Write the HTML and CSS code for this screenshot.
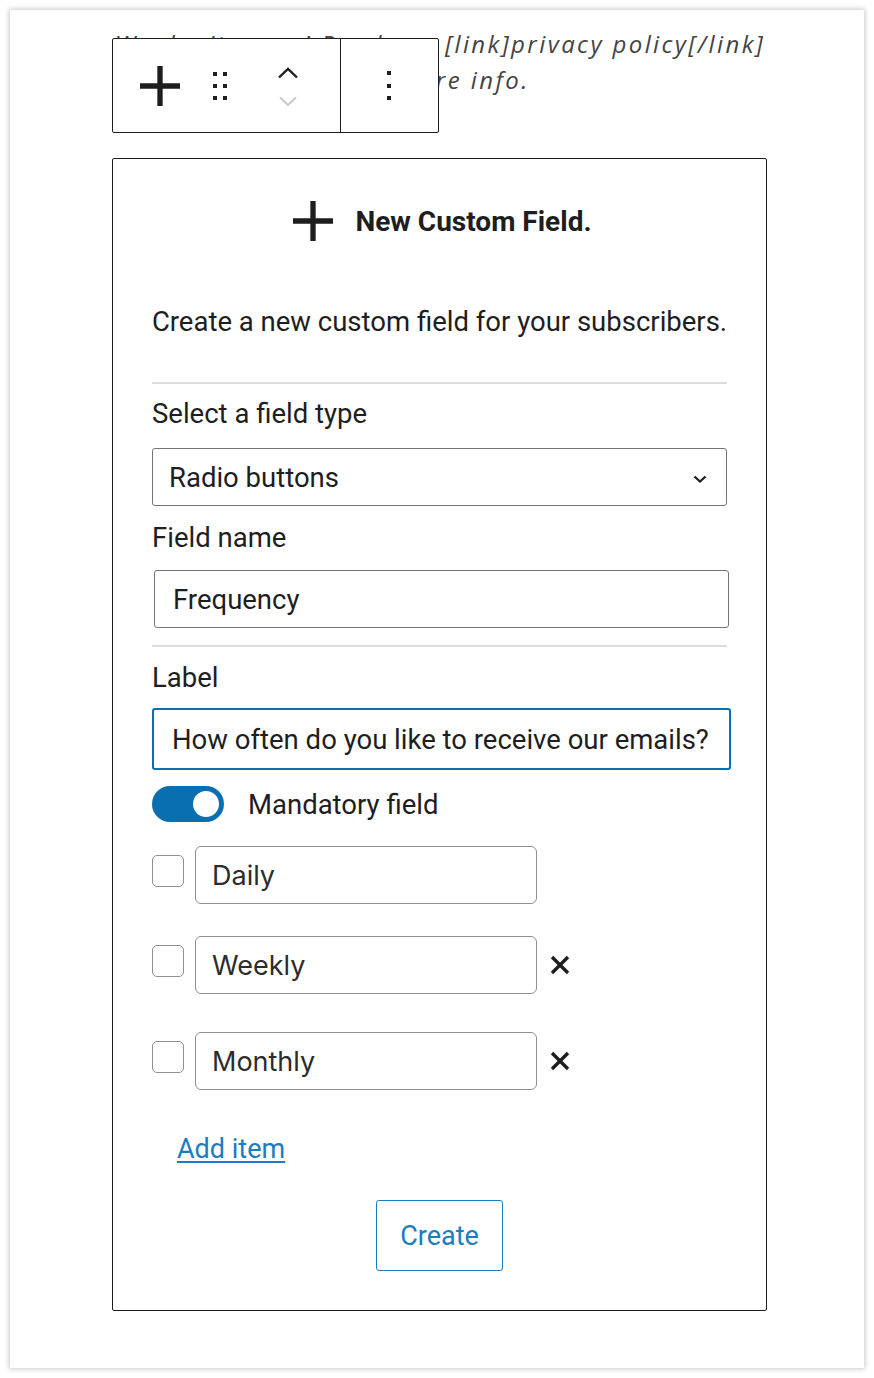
FILE: index.html
```html
<!DOCTYPE html>
<html lang="en">
<head>
<meta charset="utf-8">
<title>New Custom Field</title>
<link rel="stylesheet" href="styles.css">
</head>
<body>
<div class="frame">
  <p class="bg-text">We don't spam! Read our [link]privacy policy[/link] for more info.</p>

  <div class="toolbar">
    <div class="tb-group tb-main">
      <button class="tb-btn tb-plus" aria-label="Add block">
        <svg width="40" height="40" viewBox="6 6 12 12"><path d="M18 11.2h-5.2V6h-1.6v5.2H6v1.6h5.2V18h1.6v-5.2H18z" fill="#1e1e1e"/></svg>
      </button>
      <span class="tb-drag" aria-hidden="true">
        <svg width="18" height="30" viewBox="0 0 18 30"><g fill="#1e1e1e"><rect x="2" y="1" width="4" height="4"/><rect x="12" y="1" width="4" height="4"/><rect x="2" y="13" width="4" height="4"/><rect x="12" y="13" width="4" height="4"/><rect x="2" y="25" width="4" height="4"/><rect x="12" y="25" width="4" height="4"/></g></svg>
      </span>
      <span class="tb-movers">
        <svg width="24" height="14" viewBox="0 0 24 14"><path d="M3 11.5 12 3l9 8.5" fill="none" stroke="#1e1e1e" stroke-width="2.4"/></svg>
        <svg width="24" height="14" viewBox="0 0 24 14"><path d="M4 3.5l8 7.5 8-7.5" fill="none" stroke="#c8c8c8" stroke-width="2"/></svg>
      </span>
    </div>
    <div class="tb-group tb-more">
      <svg width="6" height="32" viewBox="0 0 6 32"><g fill="#1e1e1e"><rect x="1" y="1" width="4" height="4"/><rect x="1" y="14" width="4" height="4"/><rect x="1" y="26" width="4" height="4"/></g></svg>
    </div>
  </div>

  <div class="cf-block">
    <div class="cf-header">
      <svg width="40" height="44" viewBox="6 5.5 12 13"><path d="M18 11.2h-5.2V6h-1.6v5.2H6v1.6h5.2V18h1.6v-5.2H18z" fill="#1e1e1e"/></svg>
      <span class="cf-title">New Custom Field.</span>
    </div>
    <p class="cf-desc">Create a new custom field for your subscribers.</p>
    <hr class="cf-sep cf-sep-first">

    <label class="cf-label lbl-type">Select a field type</label>
    <div class="cf-select">
      <span>Radio buttons</span>
      <svg width="16" height="10" viewBox="0 0 16 10"><path d="M2.5 2.5 8 7.5l5.5-5" fill="none" stroke="#1e1e1e" stroke-width="2.2"/></svg>
    </div>

    <label class="cf-label lbl-name">Field name</label>
    <div class="cf-input cf-input-name">Frequency</div>
    <hr class="cf-sep cf-sep-second">

    <label class="cf-label lbl-label">Label</label>
    <div class="cf-input cf-input-focus">How often do you like to receive our emails?</div>

    <div class="cf-toggle-row">
      <span class="cf-toggle"><span class="cf-knob"></span></span>
      <span class="cf-toggle-text">Mandatory field</span>
    </div>

    <div class="cf-item item-1">
      <span class="cf-check"></span>
      <div class="cf-item-input">Daily</div>
    </div>
    <div class="cf-item item-2">
      <span class="cf-check"></span>
      <div class="cf-item-input">Weekly</div>
      <svg class="cf-x" width="22" height="22" viewBox="0 0 22 22"><path d="M3 3l16 16M19 3 3 19" stroke="#1e1e1e" stroke-width="3.4"/></svg>
    </div>
    <div class="cf-item item-3">
      <span class="cf-check"></span>
      <div class="cf-item-input">Monthly</div>
      <svg class="cf-x" width="22" height="22" viewBox="0 0 22 22"><path d="M3 3l16 16M19 3 3 19" stroke="#1e1e1e" stroke-width="3.4"/></svg>
    </div>

    <a class="cf-add" href="#">Add item</a>
    <div class="cf-actions">
      <button class="cf-create">Create</button>
    </div>
  </div>
</div>
</body>
</html>
```

FILE: styles.css
```css
* { box-sizing: border-box; }

html, body {
  margin: 0;
  padding: 0;
  background: #ffffff;
}

body {
  font-family: Roboto, "Liberation Sans", Arial, sans-serif;
  color: #1e1e1e;
}

.frame {
  position: relative;
  margin: 10px;
  width: 854px;
  height: 1358px;
  background: #ffffff;
  box-shadow: 0 0 5px 1px rgba(0, 0, 0, 0.22);
  padding: 16px 0 0 102px;
}

.bg-text {
  margin: 0;
  width: 656px;
  text-align: center;
  font-family: "Open Sans", Lato, sans-serif;
  font-style: italic;
  font-size: 24px;
  letter-spacing: 2.4px;
  line-height: 36px;
  color: #444;
}

/* block toolbar overlay */
.toolbar {
  position: absolute;
  left: 102px;
  top: 28px;
  height: 95px;
  display: flex;
  background: #fff;
  border: 1.5px solid #1e1e1e;
  border-radius: 2px;
}

.tb-group {
  display: flex;
  align-items: center;
  height: 100%;
}

.tb-main {
  width: 228px;
  border-right: 1.5px solid #1e1e1e;
  padding-left: 27px;
}

.tb-btn {
  border: 0;
  background: none;
  padding: 0;
  display: flex;
}

.tb-drag {
  display: flex;
  margin-left: 31px;
}

.tb-movers {
  display: flex;
  flex-direction: column;
  gap: 14px;
  margin-left: 47px;
  margin-top: 2px;
}

.tb-more {
  width: 97px;
  justify-content: center;
  padding-right: 2px;
}

/* custom field block */
.cf-block {
  margin-top: 60px;
  width: 655px;
  height: 1153px;
  border: 1.5px solid #1e1e1e;
  border-radius: 2px;
  padding: 40px 39px 0 39px;
  display: flex;
  flex-direction: column;
}

.cf-header {
  display: flex;
  align-items: center;
  justify-content: center;
  gap: 22px;
  height: 44px;
  padding-left: 6px;
}

.cf-title {
  font-weight: 700;
  font-size: 28px;
}

.cf-desc {
  margin: 64px -10px 0;
  text-align: center;
  white-space: nowrap;
  font-size: 27.5px;
  line-height: 30px;
}

.cf-sep {
  border: 0;
  height: 2px;
  background: #dcdcde;
  margin: 0;
}

.cf-sep-first { margin-top: 45px; }
.cf-sep-second { margin-top: 17px; }

.cf-label {
  display: block;
  font-size: 27.5px;
  line-height: 30px;
}

.lbl-type { margin-top: 15px; }
.lbl-name { margin-top: 17px; }
.lbl-label { margin-top: 16px; }

.cf-select {
  margin-top: 19px;
  height: 58px;
  border: 1.5px solid #757575;
  border-radius: 3px;
  display: flex;
  align-items: center;
  justify-content: space-between;
  padding: 0 18px 0 16px;
  font-size: 27.5px;
}

.cf-select svg { margin-top: 4px; }

.cf-input {
  height: 58px;
  border: 1.5px solid #757575;
  border-radius: 3px;
  display: flex;
  align-items: center;
  padding: 0 18px;
  font-size: 27.5px;
  white-space: nowrap;
}

.cf-input-name {
  margin-top: 17px;
  margin-left: 2px;
  margin-right: -2px;
}

.cf-input-focus {
  margin-top: 15px;
  height: 62px;
  border: 2.5px solid #0a6fb0;
  border-radius: 3px;
  margin-right: -4px;
  padding-left: 18px;
}

.cf-toggle-row {
  margin-top: 16px;
  display: flex;
  align-items: center;
  height: 36px;
}

.cf-toggle {
  width: 72px;
  height: 36px;
  border-radius: 18px;
  background: #0a6fb0;
  position: relative;
  flex: none;
}

.cf-knob {
  position: absolute;
  right: 5px;
  top: 5px;
  width: 26px;
  height: 26px;
  border-radius: 50%;
  background: #fff;
}

.cf-toggle-text {
  margin-left: 24px;
  font-size: 27.5px;
}

.cf-item {
  display: flex;
  align-items: center;
  height: 58px;
}

.item-1 { margin-top: 24px; }
.item-2 { margin-top: 32px; }
.item-3 { margin-top: 38px; }

.cf-check {
  width: 32px;
  height: 32px;
  border: 1.5px solid #8c8f94;
  border-radius: 5px;
  flex: none;
  align-self: flex-start;
  margin-top: 9px;
}

.cf-item-input {
  margin-left: 11px;
  width: 342px;
  height: 58px;
  border: 1.5px solid #8c8f94;
  border-radius: 6px;
  display: flex;
  align-items: center;
  padding: 0 16px;
  font-family: Inter, Roboto, sans-serif;
  font-size: 27px;
  color: #2c2c2c;
}

.cf-x {
  margin-left: 12px;
}

.cf-add {
  margin-top: 44px;
  margin-left: 25px;
  align-self: flex-start;
  font-size: 27px;
  line-height: 30px;
  color: #1a7dc0;
  text-decoration: underline;
  text-underline-offset: 3px;
}

.cf-actions {
  margin-top: 36px;
  display: flex;
  justify-content: center;
}

.cf-create {
  width: 127px;
  height: 71px;
  border: 1.5px solid #1a7dc0;
  border-radius: 3px;
  background: #fff;
  color: #1a7dc0;
  font-family: Roboto, "Liberation Sans", sans-serif;
  font-size: 27px;
  padding: 0;
}
```
